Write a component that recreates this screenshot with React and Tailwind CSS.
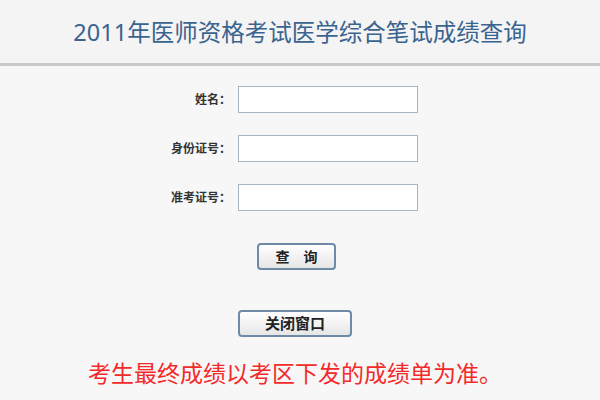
export default function App() {
  const font = { fontFamily: '"Noto Sans", "Noto Sans CJK SC", sans-serif' };
  const Row = ({ label }) => (
    <div className="flex items-center h-[27px]">
      <div className="w-[70px] text-right text-[12px] font-bold text-[#333] leading-none pr-[2px]">{label}</div>
      <input className="ml-[5px] w-[180px] h-[27px] bg-white border border-[#a7b4c2] outline-none" />
    </div>
  );
  return (
    <div className="w-[600px] h-[400px] bg-[#f7f7f7] overflow-hidden" style={font}>
      <div className="h-[63px] bg-[#f4f4f4] flex items-center justify-center">
        <div className="text-[23.5px] text-[#3a6390] leading-none pt-[2px]">2011年医师资格考试医学综合笔试成绩查询</div>
      </div>
      <div className="h-[3px] bg-[#c9c9c9]" />
      <div className="pt-[20px] ml-[163px] flex flex-col gap-[22px]">
        <Row label="姓名：" />
        <Row label="身份证号：" />
        <Row label="准考证号：" />
      </div>
      <div className="mt-[32px] ml-[257px]">
        <button className="w-[79px] h-[27px] rounded-[4px] border-2 border-[#6f8aa6] bg-gradient-to-b from-[#ffffff] to-[#e6e6e6] text-[14px] font-bold text-[#222] leading-none flex items-center justify-center">查　询</button>
      </div>
      <div className="mt-[40px] ml-[238px]">
        <button className="w-[114px] h-[27px] rounded-[4px] border-2 border-[#6f8aa6] bg-gradient-to-b from-[#ffffff] to-[#e6e6e6] text-[15px] font-bold text-[#222] leading-none flex items-center justify-center">关闭窗口</button>
      </div>
      <div className="mt-[21px] text-center text-[23px] text-[#f42a2a] leading-[30px] mr-[10px]">考生最终成绩以考区下发的成绩单为准。</div>
    </div>
  );
}
